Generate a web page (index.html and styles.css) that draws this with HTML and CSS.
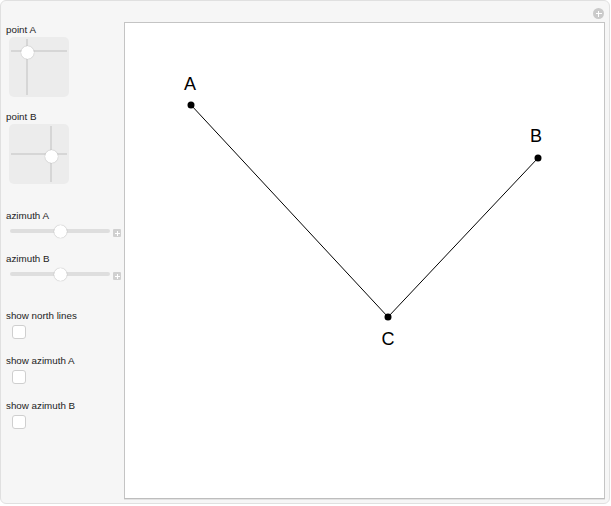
FILE: index.html
```html
<!DOCTYPE html>
<html>
<head>
<meta charset="utf-8">
<link rel="stylesheet" href="styles.css">
</head>
<body>
<div class="panel">
  <div class="controls">
    <div class="label first">point A</div>
    <div class="pad">
      <div class="vline" style="left:17px"></div>
      <div class="hline" style="top:13px"></div>
      <div class="knob" style="left:18px;top:15px"></div>
    </div>
    <div class="label gap-pad">point B</div>
    <div class="pad">
      <div class="vline" style="left:41px"></div>
      <div class="hline" style="top:29px"></div>
      <div class="knob" style="left:42px;top:32px"></div>
    </div>
    <div class="label gap-slider">azimuth A</div>
    <div class="slider-row">
      <div class="slider"><div class="track"></div><div class="thumb" style="left:50px"></div></div>
      <div class="plus"></div>
    </div>
    <div class="label gap-s2">azimuth B</div>
    <div class="slider-row">
      <div class="slider"><div class="track"></div><div class="thumb" style="left:50px"></div></div>
      <div class="plus"></div>
    </div>
    <div class="label gap-cb1">show north lines</div>
    <div class="checkbox"></div>
    <div class="label gap-cb">show azimuth A</div>
    <div class="checkbox"></div>
    <div class="label gap-cb">show azimuth B</div>
    <div class="checkbox"></div>
  </div>
  <div class="plot">
    <svg width="479" height="475" viewBox="0 0 479 475">
      <polyline points="66,82 263,294 413,135" fill="none" stroke="#000" stroke-width="1"/>
      <circle cx="66" cy="82" r="3.5" fill="#000"/>
      <circle cx="263" cy="294" r="3.5" fill="#000"/>
      <circle cx="413" cy="135" r="3.5" fill="#000"/>
      <text x="65" y="67" class="pt">A</text>
      <text x="411" y="119" class="pt">B</text>
      <text x="263" y="322" class="pt">C</text>
    </svg>
  </div>
  <div class="corner"></div>
</div>
</body>
</html>
```
FILE: styles.css
```css
html, body { margin: 0; padding: 0; background: #fff; }
.panel {
  position: relative;
  box-sizing: border-box;
  width: 610px;
  height: 504px;
  background: #f6f6f6;
  border: 1px solid #e0e0e0;
  border-radius: 6px;
  display: flex;
  align-items: flex-start;
  font-family: "Liberation Sans", Arial, sans-serif;
}
.controls {
  width: 118px;
  padding-left: 5px;
  display: flex;
  flex-direction: column;
  align-items: flex-start;
}
.label {
  font-size: 9.8px;
  line-height: 11px;
  color: #222;
}
.first { margin-top: 23px; }
.gap-pad { margin-top: 14px; }
.gap-slider { margin-top: 26px; }
.gap-s2 { margin-top: 15px; }
.gap-cb1 { margin-top: 29px; }
.gap-cb { margin-top: 16px; }
.pad {
  position: relative;
  margin-top: 2px;
  margin-left: 3px;
  width: 60px;
  height: 60px;
  background: #ececec;
  border-radius: 5px;
}
.vline {
  position: absolute;
  top: 2px;
  bottom: 2px;
  width: 2px;
  background: #d6d6d6;
}
.hline {
  position: absolute;
  left: 2px;
  right: 2px;
  height: 2px;
  background: #d6d6d6;
}
.knob {
  position: absolute;
  width: 13px;
  height: 13px;
  margin-left: -6.5px;
  margin-top: -6.5px;
  border-radius: 50%;
  background: #fff;
  box-shadow: 0 0 1px rgba(0,0,0,0.35);
}
.slider-row {
  margin-top: 3px;
  display: flex;
  align-items: center;
  gap: 3px;
  height: 14px;
}
.slider {
  position: relative;
  margin-left: 4px;
  width: 100px;
  height: 14px;
}
.track {
  position: absolute;
  left: 0;
  right: 0;
  top: 5px;
  height: 4px;
  border-radius: 2px;
  background: #dedede;
}
.thumb {
  position: absolute;
  top: 0.5px;
  width: 13px;
  height: 13px;
  margin-left: -6.5px;
  border-radius: 50%;
  background: #fff;
  box-shadow: 0 0 1px rgba(0,0,0,0.4);
}
.plus {
  position: relative;
  width: 8px;
  height: 8px;
  margin-top: 4px;
  background: #d0d0d0;
  border-radius: 1px;
}
.plus::before, .plus::after {
  content: "";
  position: absolute;
  background: #fff;
}
.plus::before { left: 1.5px; right: 1.5px; top: 3.5px; height: 1px; }
.plus::after { top: 1.5px; bottom: 1.5px; left: 3.5px; width: 1px; }
.checkbox {
  margin-top: 4px;
  margin-left: 6px;
  box-sizing: border-box;
  width: 14px;
  height: 14px;
  background: #fff;
  border: 1px solid #cfcfcf;
  border-radius: 3px;
}
.plot {
  margin-top: 21px;
  width: 479px;
  height: 475px;
  background: #fff;
  border: 1px solid #c4c4c4;
  border-bottom-color: #bdbdbd;
  box-shadow: 0 1px 0 #e2e2e2;
}
.plot svg { display: block; }
.pt {
  font-family: "Liberation Sans", Arial, sans-serif;
  font-size: 18px;
  text-anchor: middle;
  fill: #000;
}
.corner {
  position: absolute;
  right: 5px;
  top: 7px;
  width: 11px;
  height: 11px;
  border-radius: 50%;
  background: #cacaca;
}
.corner::before, .corner::after {
  content: "";
  position: absolute;
  background: #fff;
}
.corner::before { left: 2.5px; right: 2.5px; top: 5px; height: 1px; }
.corner::after { top: 2.5px; bottom: 2.5px; left: 5px; width: 1px; }
```
